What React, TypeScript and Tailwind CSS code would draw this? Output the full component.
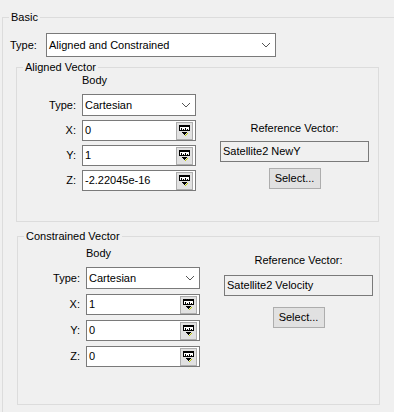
import React from "react";

function PickerButton() {
  return (
    <div className="flex h-[18px] w-[17px] shrink-0 items-center justify-center border border-[#adadad] bg-[#e1e1e1]">
      <svg width="11" height="11" viewBox="0 0 11 11" shapeRendering="crispEdges">
        <rect x="0.5" y="0.5" width="10" height="5" fill="#fff" stroke="#000" />
        <path d="M0 1.5h11" stroke="#000" />
        <path d="M2.5 3v3M4.5 4v2M6.5 3v3M8.5 4v2" stroke="#000" />
        <path d="M3 7h5l-2.5 3z" fill="#000" />
        <path d="M6 10.5h1M7 9.5h1M8 8.5h1" stroke="#b8c400" />
      </svg>
    </div>
  );
}

function Chevron() {
  return (
    <svg width="10" height="6" viewBox="0 0 10 6">
      <polyline points="1,1 5,5 9,1" fill="none" stroke="#555" strokeWidth="1" />
    </svg>
  );
}

function Combo({ value, className }: { value: string; className: string }) {
  return (
    <div className={`flex items-center justify-between border border-[#7a7a7a] bg-white pl-[2px] pr-[4px] ${className}`}>
      <span>{value}</span>
      <Chevron />
    </div>
  );
}

function NumberField({ value }: { value: string }) {
  return (
    <div className="flex h-[21px] w-[114px] items-center border border-[#7a7a7a] bg-white pl-[2px] pr-[2px]">
      <span className="flex-1">{value}</span>
      <PickerButton />
    </div>
  );
}

interface VectorGroupProps {
  title: string;
  values: string[];
  reference: string;
  boxClass: string;
  padClass: string;
  labelClass: string;
  rowClass: string;
  refLabelClass: string;
  refBoxClass: string;
  buttonClass: string;
}

function VectorGroup(p: VectorGroupProps) {
  const axes = ["X:", "Y:", "Z:"];
  return (
    <fieldset className={`w-[363px] border border-[#dcdcdc] ${p.boxClass}`}>
      <legend className="ml-[6px] px-[2px] leading-[13px]">{p.title}</legend>
      <div className={`flex ${p.padClass}`}>
        {/* Body column */}
        <div className="flex flex-col">
          <div className="flex gap-[6px] leading-[13px]">
            <span className={p.labelClass} />
            <span>Body</span>
          </div>
          <div className="mt-[7px] flex items-center gap-[6px]">
            <span className={`text-right ${p.labelClass}`}>Type:</span>
            <Combo value="Cartesian" className="h-[22px] w-[114px]" />
          </div>
          {axes.map((axis, i) => (
            <div key={axis} className={`flex items-center gap-[6px] ${p.rowClass}`}>
              <span className={`text-right ${p.labelClass}`}>{axis}</span>
              <NumberField value={p.values[i]} />
            </div>
          ))}
        </div>

        {/* Reference column */}
        <div className="ml-[24px] flex w-[149px] flex-col items-center">
          <span className={`leading-[13px] ${p.refLabelClass}`}>Reference Vector:</span>
          <div className={`flex h-[21px] w-[149px] items-center border border-[#7a7a7a] bg-[#f0f0f0] pl-[2px] ${p.refBoxClass}`}>
            {p.reference}
          </div>
          <button className={`h-[21px] w-[52px] border border-[#adadad] bg-[#e1e1e1] ${p.buttonClass}`}>
            Select...
          </button>
        </div>
      </div>
    </fieldset>
  );
}

export default function App() {
  return (
    <div className="h-[412px] w-[394px] overflow-hidden bg-[#f0f0f0] font-['Liberation_Sans',Arial,sans-serif] text-[11px] text-black">
      <fieldset className="ml-[2px] mt-[11px] h-[420px] w-[420px] border border-[#dcdcdc]">
        <legend className="ml-[6px] px-[2px] leading-[13px]">Basic</legend>
        <div className="pl-[7px] pt-[9px]">
          <div className="flex items-center">
            <span className="w-[36px]">Type:</span>
            <Combo value="Aligned and Constrained" className="h-[24px] w-[230px]" />
          </div>

          <VectorGroup
            title="Aligned Vector"
            values={["0", "1", "-2.22045e-16"]}
            reference="Satellite2 NewY"
            boxClass="ml-[6px] mt-[4px] h-[161px]"
            padClass="pt-0"
            labelClass="w-[59px]"
            rowClass="mt-[4px]"
            refLabelClass="mt-[48px]"
            refBoxClass="mt-[6px]"
            buttonClass="mt-[6px]"
          />

          <VectorGroup
            title="Constrained Vector"
            values={["1", "0", "0"]}
            reference="Satellite2 Velocity"
            boxClass="ml-[7px] mt-[8px] h-[175px]"
            padClass="pt-[4px]"
            labelClass="w-[62px]"
            rowClass="mt-[5px]"
            refLabelClass="mt-[7px]"
            refBoxClass="mt-[8px]"
            buttonClass="mt-[11px]"
          />
        </div>
      </fieldset>
    </div>
  );
}
